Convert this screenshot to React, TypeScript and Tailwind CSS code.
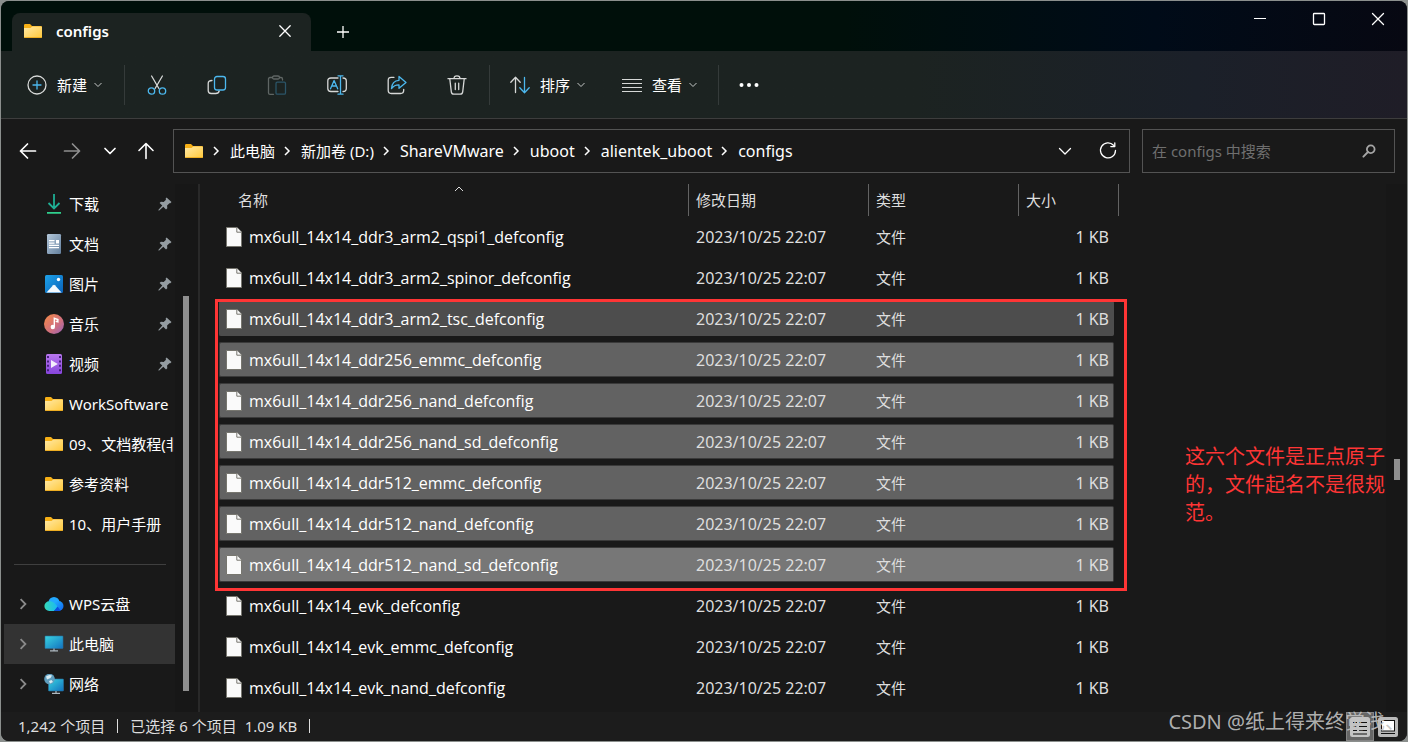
import React from 'react';

interface FileRow {
  name: string;
  bg?: string;
}

const files: FileRow[] = [
  { name: 'mx6ull_14x14_ddr3_arm2_qspi1_defconfig' },
  { name: 'mx6ull_14x14_ddr3_arm2_spinor_defconfig' },
  { name: 'mx6ull_14x14_ddr3_arm2_tsc_defconfig', bg: 'bg-[#4d4d4d] border-[#4d4d4d]' },
  { name: 'mx6ull_14x14_ddr256_emmc_defconfig', bg: 'bg-[#626262] border-[#3a3a3a]' },
  { name: 'mx6ull_14x14_ddr256_nand_defconfig', bg: 'bg-[#626262] border-[#3a3a3a]' },
  { name: 'mx6ull_14x14_ddr256_nand_sd_defconfig', bg: 'bg-[#626262] border-[#3a3a3a]' },
  { name: 'mx6ull_14x14_ddr512_emmc_defconfig', bg: 'bg-[#626262] border-[#3a3a3a]' },
  { name: 'mx6ull_14x14_ddr512_nand_defconfig', bg: 'bg-[#626262] border-[#3a3a3a]' },
  { name: 'mx6ull_14x14_ddr512_nand_sd_defconfig', bg: 'bg-[#777777] border-[#3a3a3a]' },
  { name: 'mx6ull_14x14_evk_defconfig' },
  { name: 'mx6ull_14x14_evk_emmc_defconfig' },
  { name: 'mx6ull_14x14_evk_nand_defconfig' },
];

const crumbs = [
  { label: '此电脑', size: 'text-[15px]' },
  { label: '新加卷 (D:)', size: 'text-[15px]' },
  { label: 'ShareVMware', size: 'text-base' },
  { label: 'uboot', size: 'text-base' },
  { label: 'alientek_uboot', size: 'text-base' },
  { label: 'configs', size: 'text-base' },
];

function Icon({ children, size = 'w-5 h-5' }: { children: React.ReactNode; size?: string }) {
  return (
    <svg viewBox="0 0 20 20" className={`${size} shrink-0`} fill="none" stroke="#d6d8d7" strokeWidth="1.3" strokeLinecap="round" strokeLinejoin="round">
      {children}
    </svg>
  );
}

function FolderIcon() {
  return (
    <svg viewBox="0 0 20 20" className="w-5 h-5 shrink-0">
      <defs>
        <linearGradient id="folder" x1="0" y1="0" x2="1" y2="1">
          <stop offset="0" stopColor="#ffe9a6" />
          <stop offset="1" stopColor="#ffc83a" />
        </linearGradient>
      </defs>
      <path d="M1 4.200Q1 3 2.200 3H7l2 2h9q1 0 1 1v6H1z" fill="#f7b016" />
      <path d="M1 7h6.500L9.300 5.500H18q1 0 1 1v9.500q0 1-1 1H2q-1 0-1-1z" fill="url(#folder)" />
      <path d="M1.300 16.500h17.400" stroke="#eba91d" strokeWidth="0.900" />
    </svg>
  );
}

function DownloadIcon() {
  return (
    <svg viewBox="0 0 20 20" className="w-5 h-5 shrink-0" fill="none" stroke="#22bd8c" strokeWidth="1.8">
      <path d="M10 0v14.500M4.500 9l5.500 5.500L15.500 9" stroke="#1fae94" />
      <path d="M3 18.900h14" stroke="#2fcf8d" />
    </svg>
  );
}

function DocIcon() {
  return (
    <svg viewBox="0 0 20 20" className="w-5 h-5 shrink-0">
      <defs>
        <linearGradient id="doc" x1="0" y1="0" x2="1" y2="1">
          <stop offset="0" stopColor="#b4c8da" />
          <stop offset="1" stopColor="#64809e" />
        </linearGradient>
      </defs>
      <rect x="3" y="0" width="14" height="20" rx="1.200" fill="url(#doc)" />
      <path d="M5 6.700h5.500M5 9.200h5.500M5 11.400h10M5 13.600h10" stroke="#fff" strokeWidth="1.200" />
      <rect x="12" y="6" width="3" height="3.500" fill="#fff" />
    </svg>
  );
}

function PictureIcon() {
  return (
    <svg viewBox="0 0 20 20" className="w-5 h-5 shrink-0">
      <defs>
        <linearGradient id="pic" x1="0" y1="0" x2="1" y2="1">
          <stop offset="0" stopColor="#1ea2e8" />
          <stop offset="1" stopColor="#0962bb" />
        </linearGradient>
      </defs>
      <rect x="1" y="1" width="18" height="18" rx="1.500" fill="url(#pic)" />
      <path d="M2.500 18.500l6.600-7.300q.9-.9 1.800 0l6.600 7.300z" fill="#f4f9fd" />
      <circle cx="14.500" cy="5.500" r="1.700" fill="#fff" />
    </svg>
  );
}

function MusicIcon() {
  return (
    <svg viewBox="0 0 20 20" className="w-5 h-5 shrink-0">
      <defs>
        <linearGradient id="music" x1="0" y1="0" x2="1" y2="1">
          <stop offset="0.1" stopColor="#f0864e" />
          <stop offset="0.600" stopColor="#cf6f80" />
          <stop offset="1" stopColor="#9361ba" />
        </linearGradient>
      </defs>
      <circle cx="10" cy="10" r="10" fill="url(#music)" />
      <circle cx="8.800" cy="13" r="2.200" fill="#fff" />
      <path d="M10.300 13V4.300l3.600 1.200v2.300l-2.200-.6" fill="none" stroke="#fff" strokeWidth="1.400" />
    </svg>
  );
}

function VideoIcon() {
  return (
    <svg viewBox="0 0 20 20" className="w-5 h-5 shrink-0">
      <defs>
        <linearGradient id="video" x1="0" y1="0" x2="0" y2="1">
          <stop offset="0" stopColor="#b877ee" />
          <stop offset="1" stopColor="#8745dc" />
        </linearGradient>
      </defs>
      <rect x="2" y="0" width="16" height="20" rx="1.500" fill="url(#video)" />
      <path d="M4 2v17M16 2v17" stroke="#3b1a70" strokeWidth="1.800" strokeDasharray="2 2.400" />
      <path d="M7 6l6.800 4L7 14z" fill="#f4eefc" />
    </svg>
  );
}

function CloudIcon() {
  return (
    <svg viewBox="0 0 20 20" className="w-5 h-5 shrink-0">
      <defs>
        <linearGradient id="cloudA" x1="0" y1="0" x2="1" y2="1">
          <stop offset="0" stopColor="#23b5ff" />
          <stop offset="1" stopColor="#0f63f2" />
        </linearGradient>
        <linearGradient id="cloudB" x1="0" y1="0" x2="1" y2="0">
          <stop offset="0" stopColor="#35d9b8" />
          <stop offset="1" stopColor="#19b8f4" />
        </linearGradient>
      </defs>
      <circle cx="10" cy="8.500" r="5.500" fill="#22a8ff" />
      <circle cx="14.500" cy="12" r="5" fill="url(#cloudA)" />
      <path d="M5.300 7.200a4.900 4.900 0 1 0 0 9.800h5l3.400-4.500-3.600-3.800a5.800 5.800 0 0 0-4.800-1.500z" fill="url(#cloudB)" />
      <path d="M10 17l3.600-4.500 3 4.200-2 .3z" fill="#0a4fe0" />
    </svg>
  );
}

function ScreenPart({ x, y, w, h }: { x: number; y: number; w: number; h: number }) {
  return (
    <>
      <rect x={x} y={y} width={w} height={h} rx="0.600" fill="url(#screen)" stroke="#2a6f9c" strokeWidth="0.600" />
      <path d={`M${x + w / 2} ${y + h}v2M${x + w / 2 - 4} ${y + h + 2.400}h8`} stroke="#aeb9c1" strokeWidth="1.200" />
    </>
  );
}

function PcIcon() {
  return (
    <svg viewBox="0 0 20 20" className="w-5 h-5 shrink-0">
      <defs>
        <linearGradient id="screen" x1="0" y1="0" x2="1" y2="1">
          <stop offset="0" stopColor="#3ad4e0" />
          <stop offset="1" stopColor="#1272bf" />
        </linearGradient>
      </defs>
      <ScreenPart x={1} y={2} w={18} h={12.5} />
    </svg>
  );
}

function NetworkIcon() {
  return (
    <svg viewBox="0 0 20 20" className="w-5 h-5 shrink-0">
      <ScreenPart x={4.5} y={5} w={15} h={12} />
      <circle cx="5.500" cy="5" r="5.300" fill="#5f9dbd" />
      <path d="M2 2.500Q5 0 8 1.500L6.500 4 3 5.500zM5 7l2.500-1L9 8 6 9.500z" fill="#d9ecf3" />
    </svg>
  );
}

function PinIcon() {
  return (
    <svg viewBox="0 0 14 14" className="w-3.5 h-3.5 shrink-0" fill="#949ca1">
      <path d="M8.600.6l4.900 4.500-1.200 1.200-.9-.1-2.300 2.200.2 2.900-1.300 1.200L5.300 9.700 1.200 13.500.4 13.600l.1-.8 3.800-4.200L1.600 5.900 2.900 4.700l2.800.2L8 2.700l-.4-1z" />
    </svg>
  );
}

function FileIcon() {
  return (
    <svg viewBox="0 0 16 20" className="w-4 h-5 shrink-0">
      <path d="M.5.5h10.500l4.500 4.500v14.500H.5z" fill="#fafafa" stroke="#77766f" />
      <path d="M10.800.5V5.200h4.700" fill="#fafafa" stroke="#77766f" />
    </svg>
  );
}

function Chevron({ dir, className }: { dir: 'down' | 'right' | 'up'; className: string }) {
  const d = { down: 'M1.500 3l3.500 3.500L8.500 3', right: 'M3 1l4 4-4 4', up: 'M1 7l4-4 4 4' }[dir];
  return (
    <svg viewBox="0 0 10 10" className={`${className} shrink-0`} fill="none" stroke="currentColor">
      <path d={d} />
    </svg>
  );
}

const quickAccess = [
  { label: '下载', icon: <DownloadIcon />, pinned: true },
  { label: '文档', icon: <DocIcon />, pinned: true },
  { label: '图片', icon: <PictureIcon />, pinned: true },
  { label: '音乐', icon: <MusicIcon />, pinned: true },
  { label: '视频', icon: <VideoIcon />, pinned: true },
  { label: 'WorkSoftware', icon: <FolderIcon /> },
  { label: '09、文档教程(非', icon: <FolderIcon /> },
  { label: '参考资料', icon: <FolderIcon /> },
  { label: '10、用户手册', icon: <FolderIcon /> },
];

const places = [
  { label: 'WPS云盘', icon: <CloudIcon /> },
  { label: '此电脑', icon: <PcIcon />, active: true },
  { label: '网络', icon: <NetworkIcon /> },
];

function TitleBar() {
  return (
    <div className="h-[50px] flex items-end bg-linear-to-r from-[#000f0a] from-60% via-[#000b18] via-82% to-[#070812]">
      <div className="ml-[11px] w-[299px] h-[38px] pl-[11px] pr-4 pb-0.5 flex items-center rounded-t-lg bg-[#1c2321]">
        <FolderIcon />
        <span className="ml-[13px] flex-1 font-semibold">configs</span>
        <button aria-label="关闭标签页" className="w-5 h-5">
          <Icon>
            <path d="M4.800 4.800l10.400 10.400M15.200 4.800L4.800 15.200" stroke="#fff" />
          </Icon>
        </button>
      </div>
      <button aria-label="新标签页" className="w-16 h-[38px] flex items-center justify-center">
        <Icon>
          <path d="M10 4v12M4 10h12" stroke="#fff" strokeLinecap="butt" />
        </Icon>
      </button>
      <div className="ml-auto self-start flex h-9">
        <button aria-label="最小化" className="w-[59px] flex items-center justify-center">
          <Icon>
            <path d="M4 9.500h12" stroke="#fff" strokeWidth="1" strokeLinecap="butt" />
          </Icon>
        </button>
        <button aria-label="最大化" className="w-[59px] flex items-center justify-center">
          <Icon>
            <rect x="4.500" y="4.500" width="11" height="11" rx="0.800" stroke="#fff" />
          </Icon>
        </button>
        <button aria-label="关闭" className="w-[59px] flex items-center justify-center">
          <Icon>
            <path d="M4.500 4.500l11 11M15.500 4.500l-11 11" stroke="#fff" />
          </Icon>
        </button>
      </div>
    </div>
  );
}

function Separator() {
  return <div className="w-px h-10 mx-0.5 bg-[#353b3a]" />;
}

function IconButton({ label, children }: { label: string; children: React.ReactNode }) {
  return (
    <button aria-label={label} className="w-[60px] h-10 flex items-center justify-center">
      <Icon>{children}</Icon>
    </button>
  );
}

function MenuButton({ label, className, children }: { label: string; className: string; children: React.ReactNode }) {
  return (
    <button className={`${className} h-10 flex items-center`}>
      <Icon>{children}</Icon>
      <span className="ml-2.5">{label}</span>
      <Chevron dir="down" className="ml-1.5 w-2.5 h-2.5 text-[#c5c8c7]" />
    </button>
  );
}

function Toolbar() {
  return (
    <div className="h-[68px] flex items-center border-b border-[#3d3d3d] bg-linear-to-r from-[#1c2321] from-65% via-[#1b2029] via-85% to-[#1f1d27]">
      <MenuButton label="新建" className="pl-[26px] pr-[19px]">
        <circle cx="10" cy="10" r="9" />
        <path d="M10 6v8M6 10h8" stroke="#4cb8ee" />
      </MenuButton>
      <Separator />
      <IconButton label="剪切">
        <path d="M4.600 1l7.300 12.500M15.400 1L8.100 13.500" />
        <circle cx="4.500" cy="16" r="3.200" stroke="#4cb8ee" />
        <circle cx="15.500" cy="16" r="3.200" stroke="#4cb8ee" />
      </IconButton>
      <IconButton label="复制">
        <path d="M5 5.500q-3.800 0-3.800 3v7q0 3 3 3h4.500q3 0 3.500-2.500" />
        <rect x="7.500" y="1.500" width="11" height="13.500" rx="2.500" stroke="#4cb8ee" />
      </IconButton>
      <IconButton label="粘贴">
        <g stroke="#5f6664">
          <path d="M5.500 2.500H3q-1.500 0-1.500 1.500v14q0 1.300 1.500 1.300h3.500M12.500 2.500H14q1.500 0 1.500 1.500v1" />
          <rect x="5.500" y="1" width="7" height="3" rx="1.500" />
        </g>
        <rect x="9" y="7.200" width="9.500" height="12" rx="1.300" stroke="#2b5568" />
      </IconButton>
      <IconButton label="重命名">
        <path d="M11 3H4Q.8 3 .8 6v7.500q0 3 3.200 3h7M16 3q3.300 0 3.300 3v7.500q0 3-3.300 3" />
        <path d="M3.500 13.800l3.600-8.300 3.600 8.300M4.700 11h4.800M13.500.8v18.400M11 .8h5M11 19.200h5" stroke="#4cb8ee" />
      </IconButton>
      <IconButton label="共享">
        <path d="M7 2.300H4.300q-3.100 0-3.100 3v10q0 3.200 3.100 3.200H13.500q3.200 0 3.200-3.200v-1" />
        <path d="M12 1.500l7 6-7 5.800v-3.500q-4.500-.2-7.500 3.700.5-7.800 7.500-8.200z" stroke="#4cb8ee" />
      </IconButton>
      <IconButton label="删除">
        <path d="M1 3.700h18M7 3.500Q7 .8 10 .8t3 2.700M2.800 4l1.500 12.800q.3 2.400 2.500 2.400h6.400q2.200 0 2.500-2.400L17.200 4M8.300 8.200v6.300M11.700 8.200v6.300" />
      </IconButton>
      <Separator />
      <MenuButton label="排序" className="pl-[18px] pr-[18px]">
        <path d="M5.500 17.500V2.500M.8 7.200l4.700-4.900 4.700 4.900" />
        <path d="M14.500 2.500v15M9.800 12.800l4.700 4.900 4.700-4.900" stroke="#4cb8ee" />
      </MenuButton>
      <MenuButton label="查看" className="pl-[18px] pr-[18px]">
        <path d="M0 4.500h20M0 8.500h20M0 12.500h20M0 16.500h20" strokeWidth="1" />
      </MenuButton>
      <Separator />
      <button aria-label="更多" className="px-[18px] h-10">
        <Icon>
          <g fill="#fff" stroke="none">
            <circle cx="2.500" cy="10" r="2" />
            <circle cx="10" cy="10" r="2" />
            <circle cx="17.500" cy="10" r="2" />
          </g>
        </Icon>
      </button>
    </div>
  );
}

function AddressRow() {
  return (
    <div className="pt-2.5 pb-[11px] pl-[5px] pr-3 flex items-center">
      <button aria-label="后退" className="w-11 h-11 flex items-center justify-center">
        <Icon>
          <path d="M2.500 10h15M9.500 3l-7 7 7 7" stroke="#fff" strokeWidth="1.700" />
        </Icon>
      </button>
      <button aria-label="前进" className="w-11 h-11 flex items-center justify-center">
        <Icon>
          <path d="M2.500 10h15M10.500 3l7 7-7 7" stroke="#8f8f8f" strokeWidth="1.700" />
        </Icon>
      </button>
      <button aria-label="最近的位置" className="w-8 h-11 flex items-center justify-center">
        <Icon>
          <path d="M5 7.500l5 5 5-5" stroke="#fff" strokeWidth="1.700" />
        </Icon>
      </button>
      <button aria-label="向上" className="w-10 h-11 flex items-center justify-center">
        <Icon>
          <path d="M10 17.500V2.500M3 9.500l7-7 7 7" stroke="#fff" strokeWidth="1.600" />
        </Icon>
      </button>
      <div className="ml-[7px] mr-3 flex-1 h-11 pl-2.5 flex items-center border border-[#535353]">
        <FolderIcon />
        <nav className="flex-1 flex items-center whitespace-nowrap">
          {crumbs.map((crumb) => (
            <React.Fragment key={crumb.label}>
              <span className="w-[26px] pr-0.5 flex justify-center">
                <Chevron dir="right" className="w-2.5 h-2.5 stroke-[1.5]" />
              </span>
              <a href="#" className={`${crumb.size} leading-5`}>
                {crumb.label}
              </a>
            </React.Fragment>
          ))}
        </nav>
        <button aria-label="展开" className="w-[43px] h-full flex items-center justify-center">
          <Icon>
            <path d="M4.500 7.500l5.500 5.500 5.500-5.500" stroke="#fff" />
          </Icon>
        </button>
        <button aria-label="刷新" className="w-[43px] h-full flex items-center justify-center">
          <Icon>
            <path d="M15.500 4.300A7.500 7.500 0 1 0 17.500 9.500M16.800 1.800v3.800h-4" stroke="#fff" />
          </Icon>
        </button>
      </div>
      <div className="w-[253px] h-11 pl-[9px] pr-[18px] flex items-center border border-[#535353]">
        <input aria-label="搜索" placeholder="在 configs 中搜索" className="min-w-0 flex-1 bg-transparent outline-none placeholder:text-[#6f6f6f]" />
        <Icon size="w-3.5 h-3.5">
          <circle cx="12.500" cy="7.500" r="5.500" stroke="#a5a5a5" strokeWidth="2.600" />
          <path d="M8.500 11.500L2 18" stroke="#a5a5a5" strokeWidth="2.800" />
        </Icon>
      </div>
    </div>
  );
}

function Sidebar() {
  return (
    <div className="w-[197px] shrink-0 flex">
      <div className="w-[171px] ml-[3px] bg-[#191919]">
        <ul>
          {quickAccess.map((item) => (
            <li key={item.label} className="h-10 pl-10 flex items-center">
              {item.icon}
              <span className="ml-[5px] mr-px flex-1 overflow-hidden whitespace-nowrap">{item.label}</span>
              {item.pinned && (
                <span className="mr-[3px]">
                  <PinIcon />
                </span>
              )}
            </li>
          ))}
        </ul>
        <div className="h-10 flex items-center pl-2.5 pr-[9px]">
          <div className="flex-1 h-px bg-[#3f3f3f]" />
        </div>
        <ul>
          {places.map((item) => (
            <li key={item.label} className={`h-10 pl-[13px] flex items-center ${item.active ? 'bg-[#333333]' : ''}`}>
              <Chevron dir="right" className="w-3 h-3 mr-[15px] text-[#8a8a8a] stroke-[1.5]" />
              {item.icon}
              <span className="ml-[5px]">{item.label}</span>
            </li>
          ))}
        </ul>
      </div>
      <div className="flex-1 pl-2 flex bg-[#171717]">
        <div className="w-1.5 mt-28 mb-[21px] bg-[#8f8f8f]" />
      </div>
    </div>
  );
}

function FileTable() {
  return (
    <table className="w-[900px] shrink-0 self-start table-fixed border-separate border-spacing-0">
      <colgroup>
        <col className="w-[470px]" />
        <col className="w-[180px]" />
        <col className="w-[150px]" />
        <col className="w-[100px]" />
      </colgroup>
      <thead>
        <tr className="h-8 text-left text-[#dedede]">
          <th className="relative p-0 pl-[19px] font-normal border-r border-[#636363]">
            名称
            <Chevron dir="up" className="absolute top-0 left-[235px] w-2.5 h-2.5" />
          </th>
          <th className="p-0 pl-[7px] font-normal border-r border-[#636363]">修改日期</th>
          <th className="p-0 pl-[7px] font-normal border-r border-[#636363]">类型</th>
          <th className="p-0 pl-[7px] font-normal border-r border-[#636363]">大小</th>
        </tr>
      </thead>
      <tbody>
        {files.map((file) => {
          const bg = file.bg || 'border-transparent';
          return (
            <tr key={file.name} className="h-[41px] text-[#dedede]">
              <td className="p-0">
                <div className={`h-[35px] pl-1.5 flex items-center border-y border-l rounded-l-xs ${bg}`}>
                  <FileIcon />
                  <span className="ml-[7px] text-base text-white font-['Open_Sans',sans-serif]">{file.name}</span>
                </div>
              </td>
              <td className="p-0">
                <div className={`h-[35px] pl-[7px] flex items-center text-base border-y ${bg}`}>2023/10/25 22:07</div>
              </td>
              <td className="p-0">
                <div className={`h-[35px] pl-[7px] flex items-center border-y ${bg}`}>文件</div>
              </td>
              <td className="p-0">
                <div className={`h-[35px] mr-[5px] pr-1 flex items-center justify-end text-base border-y border-r rounded-r-xs ${bg}`}>1 KB</div>
              </td>
            </tr>
          );
        })}
      </tbody>
    </table>
  );
}

function StatusBar() {
  return (
    <div className="relative h-[29px] pl-[17px] pr-[9px] pb-0.5 flex items-center text-[#dedede] bg-[#1c1c1c]">
      <span>1,242 个项目</span>
      <span className="mx-3 w-px h-3.5 bg-[#dedede]" />
      <span>已选择 6 个项目</span>
      <span className="ml-2">1.09 KB</span>
      <span className="mx-3 w-px h-3.5 bg-[#dedede]" />
      <div className="ml-auto h-[29px] self-start flex items-center gap-1">
        <button aria-label="详细信息" className="w-7 h-full flex items-center justify-center border border-[#848484] bg-[#666666]">
          <svg viewBox="0 0 20 20" className="w-5 h-5">
            <rect width="20" height="20" rx="2.500" fill="#c4c4c4" />
            <path d="M3 5.500h4M9 5.500h8M3 9.500h4M9 9.500h8M3 13.500h4M9 13.500h8M3 17h14" stroke="#111" strokeWidth="1.200" />
          </svg>
        </button>
        <button aria-label="大缩略图" className="w-5 h-5">
          <svg viewBox="0 0 20 20" className="w-5 h-5">
            <rect width="20" height="20" rx="2.500" fill="#b9b9b9" />
            <rect x="3.500" y="3.500" width="13" height="10.500" fill="#fff" stroke="#111" />
            <path d="M3 16.500h14" stroke="#111" strokeWidth="1.200" />
          </svg>
        </button>
      </div>
      <span className="absolute right-0.5 -top-1 text-xl leading-7 text-[#c2c2c2]/90 whitespace-nowrap">CSDN @纸上得来终觉浅、</span>
    </div>
  );
}

export default function App() {
  return (
    <div className="min-h-screen p-px flex flex-col bg-[#8b8f8d]">
      <div className="flex-1 flex flex-col overflow-hidden rounded-lg bg-[#191919] text-white text-[15px] leading-5 font-['Noto_Sans','Noto_Sans_CJK_SC',sans-serif]">
        <TitleBar />
        <Toolbar />
        <AddressRow />
        <div className="flex-1 flex">
          <Sidebar />
          <div className="relative flex-1 flex pl-[19px] border-l-2 border-[#292929]">
            <FileTable />
            <div className="absolute left-[15px] top-[115px] w-[912px] h-[292px] border-3 border-[#ff3535]" />
            <p className="absolute right-[22px] top-[259px] w-[200px] text-xl leading-7 text-[#ff3535]">
              这六个文件是正点原子的，文件起名不是很规范。
            </p>
            <div className="ml-auto w-[21px] pl-[8px] bg-[#171717]">
              <div className="mt-[275px] w-1.5 h-[21px] bg-[#8f8f8f]" />
            </div>
          </div>
        </div>
        <StatusBar />
      </div>
    </div>
  );
}
